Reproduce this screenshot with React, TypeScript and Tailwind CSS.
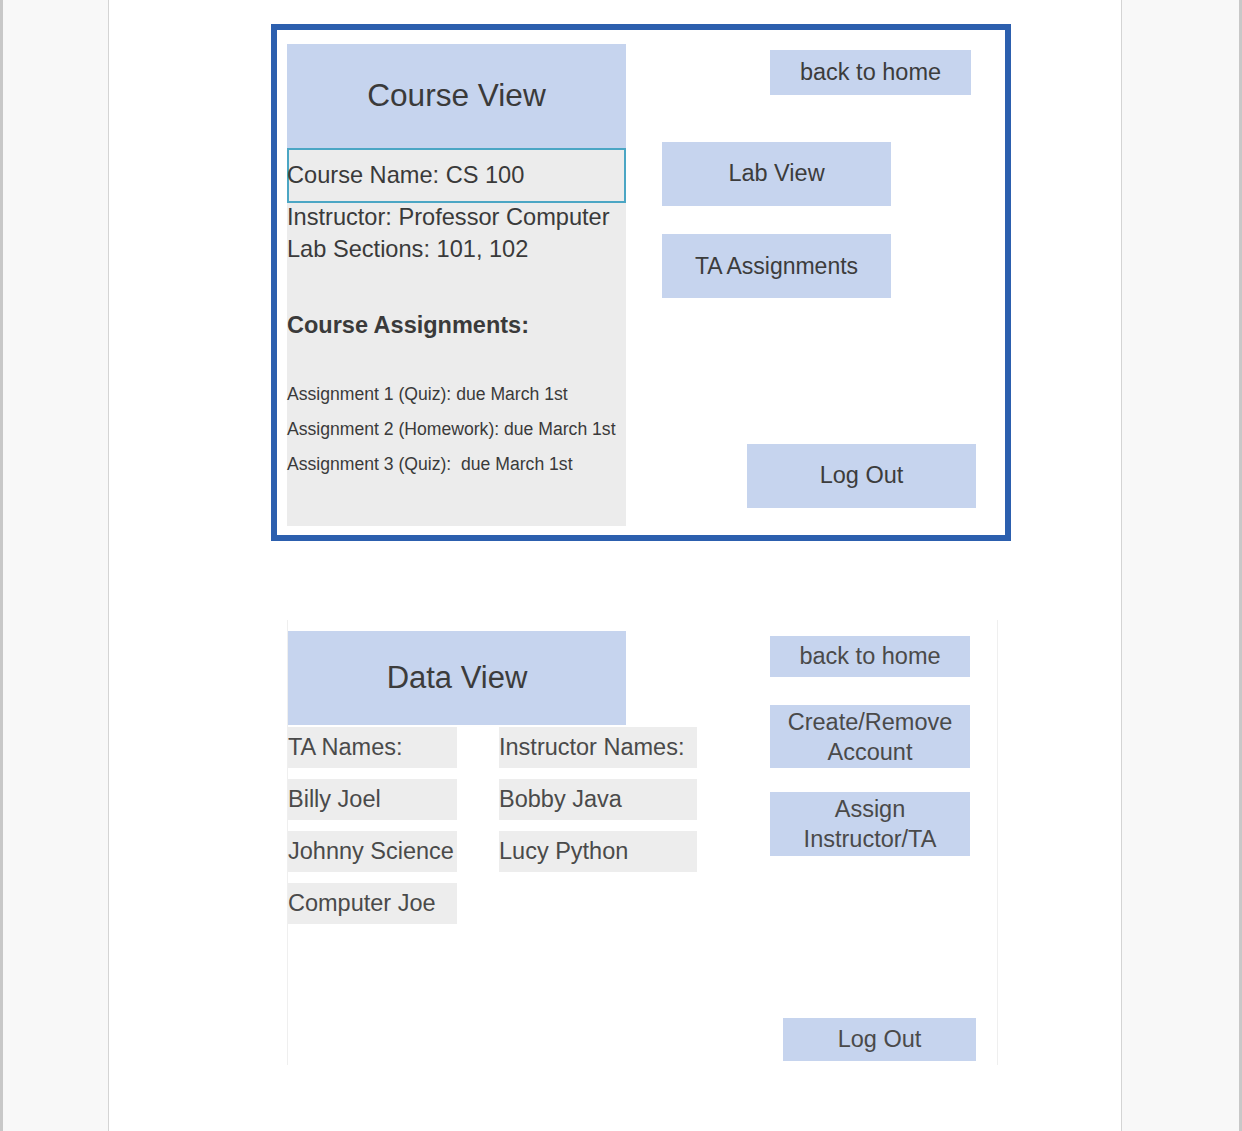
import React from "react";

const font = { fontFamily: '"Liberation Sans", Arial, sans-serif' };

function Btn({ className, children }: { className: string; children: React.ReactNode }) {
  return (
    <div className={`flex shrink-0 items-center justify-center bg-[#c6d4ee] text-center text-[#3c3c3c] ${className}`}>
      {children}
    </div>
  );
}

function Cell({ className, children }: { className: string; children: React.ReactNode }) {
  return (
    <div className={`flex h-[41px] items-center bg-[#ededed] text-[23.5px] text-[#4a4a4a] whitespace-nowrap ${className}`}>
      {children}
    </div>
  );
}

export default function App() {
  return (
    <div className="flex h-[1131px] w-[1242px] overflow-hidden" style={font}>
      <div className="w-[3px] shrink-0 bg-[#c8c8c8]" />
      <div className="w-[105px] shrink-0 bg-[#f8f8f8]" />
      <div className="flex w-[1014px] shrink-0 flex-col border-x border-[#d4d4d4] bg-white">
        {/* Course View mockup */}
        <div className="ml-[162px] mt-[24px] flex h-[517px] w-[740px] border-[6px] border-[#2c5fae] pl-[10px] pt-[14px]">
          <div className="flex h-[482px] w-[339px] shrink-0 flex-col bg-[#ececec] text-[#3a3a3a]">
            <div className="flex h-[104px] items-center justify-center bg-[#c6d4ee] text-[31.6px]">Course View</div>
            <div className="flex h-[55px] items-center text-[23.6px] shadow-[inset_0_0_0_2px_#4ba6c4]">
              Course Name: CS 100
            </div>
            <div className="-mt-[2px] text-[23.6px] leading-[32px] whitespace-nowrap">Instructor: Professor Computer</div>
            <div className="text-[23.6px] leading-[32px]">Lab Sections: 101, 102</div>
            <div className="mt-[44px] text-[23.5px] font-bold leading-[32px]">Course Assignments:</div>
            <div className="mt-[36px] text-[17.6px] leading-[35px] whitespace-nowrap">
              <div>Assignment 1 (Quiz): due March 1st</div>
              <div>Assignment 2 (Homework): due March 1st</div>
              <div>Assignment 3 (Quiz):&nbsp; due March 1st</div>
            </div>
          </div>
          <div className="flex flex-1 flex-col pl-[36px]">
            <Btn className="ml-[108px] mt-[6px] h-[45px] w-[201px] text-[23.5px]">back to home</Btn>
            <Btn className="mt-[47px] h-[64px] w-[229px] text-[23.5px]">Lab View</Btn>
            <Btn className="mt-[28px] h-[64px] w-[229px] text-[23px]">TA Assignments</Btn>
            <Btn className="ml-[85px] mt-[146px] h-[64px] w-[229px] text-[23.5px]">Log Out</Btn>
          </div>
        </div>

        {/* Data View mockup */}
        <div className="ml-[178px] mt-[79px] flex h-[445px] w-[711px] border-x border-[#efefef]">
          <div className="flex w-[409px] shrink-0 flex-col">
            <div className="mt-[11px] flex h-[94px] w-[338px] items-center justify-center bg-[#c6d4ee] text-[31px] text-[#3c3c3c]">
              Data View
            </div>
            <div className="mt-[2px] flex gap-[42px]">
              <div className="flex w-[169px] flex-col gap-[11px]">
                <Cell className="w-[169px]">TA Names:</Cell>
                <Cell className="w-[169px]">Billy Joel</Cell>
                <Cell className="w-[169px]">Johnny Science</Cell>
                <Cell className="w-[169px]">Computer Joe</Cell>
              </div>
              <div className="flex w-[198px] flex-col gap-[11px]">
                <Cell className="w-[198px]">Instructor Names:</Cell>
                <Cell className="w-[198px]">Bobby Java</Cell>
                <Cell className="w-[198px]">Lucy Python</Cell>
              </div>
            </div>
          </div>
          <div className="flex flex-1 flex-col text-[#4a4a4a]">
            <Btn className="ml-[73px] mt-[16px] h-[41px] w-[200px] text-[23.5px] !text-[#4a4a4a]">back to home</Btn>
            <Btn className="ml-[73px] mt-[28px] h-[63px] w-[200px] text-[23.5px] leading-[30px] !text-[#4a4a4a]">
              Create/Remove
              <br />
              Account
            </Btn>
            <Btn className="ml-[73px] mt-[24px] h-[64px] w-[200px] text-[23.5px] leading-[30px] !text-[#4a4a4a]">
              Assign
              <br />
              Instructor/TA
            </Btn>
            <Btn className="ml-[86px] mt-[162px] h-[43px] w-[193px] text-[23.5px] !text-[#4a4a4a]">Log Out</Btn>
          </div>
        </div>
      </div>
      <div className="w-[117px] shrink-0 bg-[#f8f8f8]" />
      <div className="w-[3px] shrink-0 bg-[#c8c8c8]" />
    </div>
  );
}
